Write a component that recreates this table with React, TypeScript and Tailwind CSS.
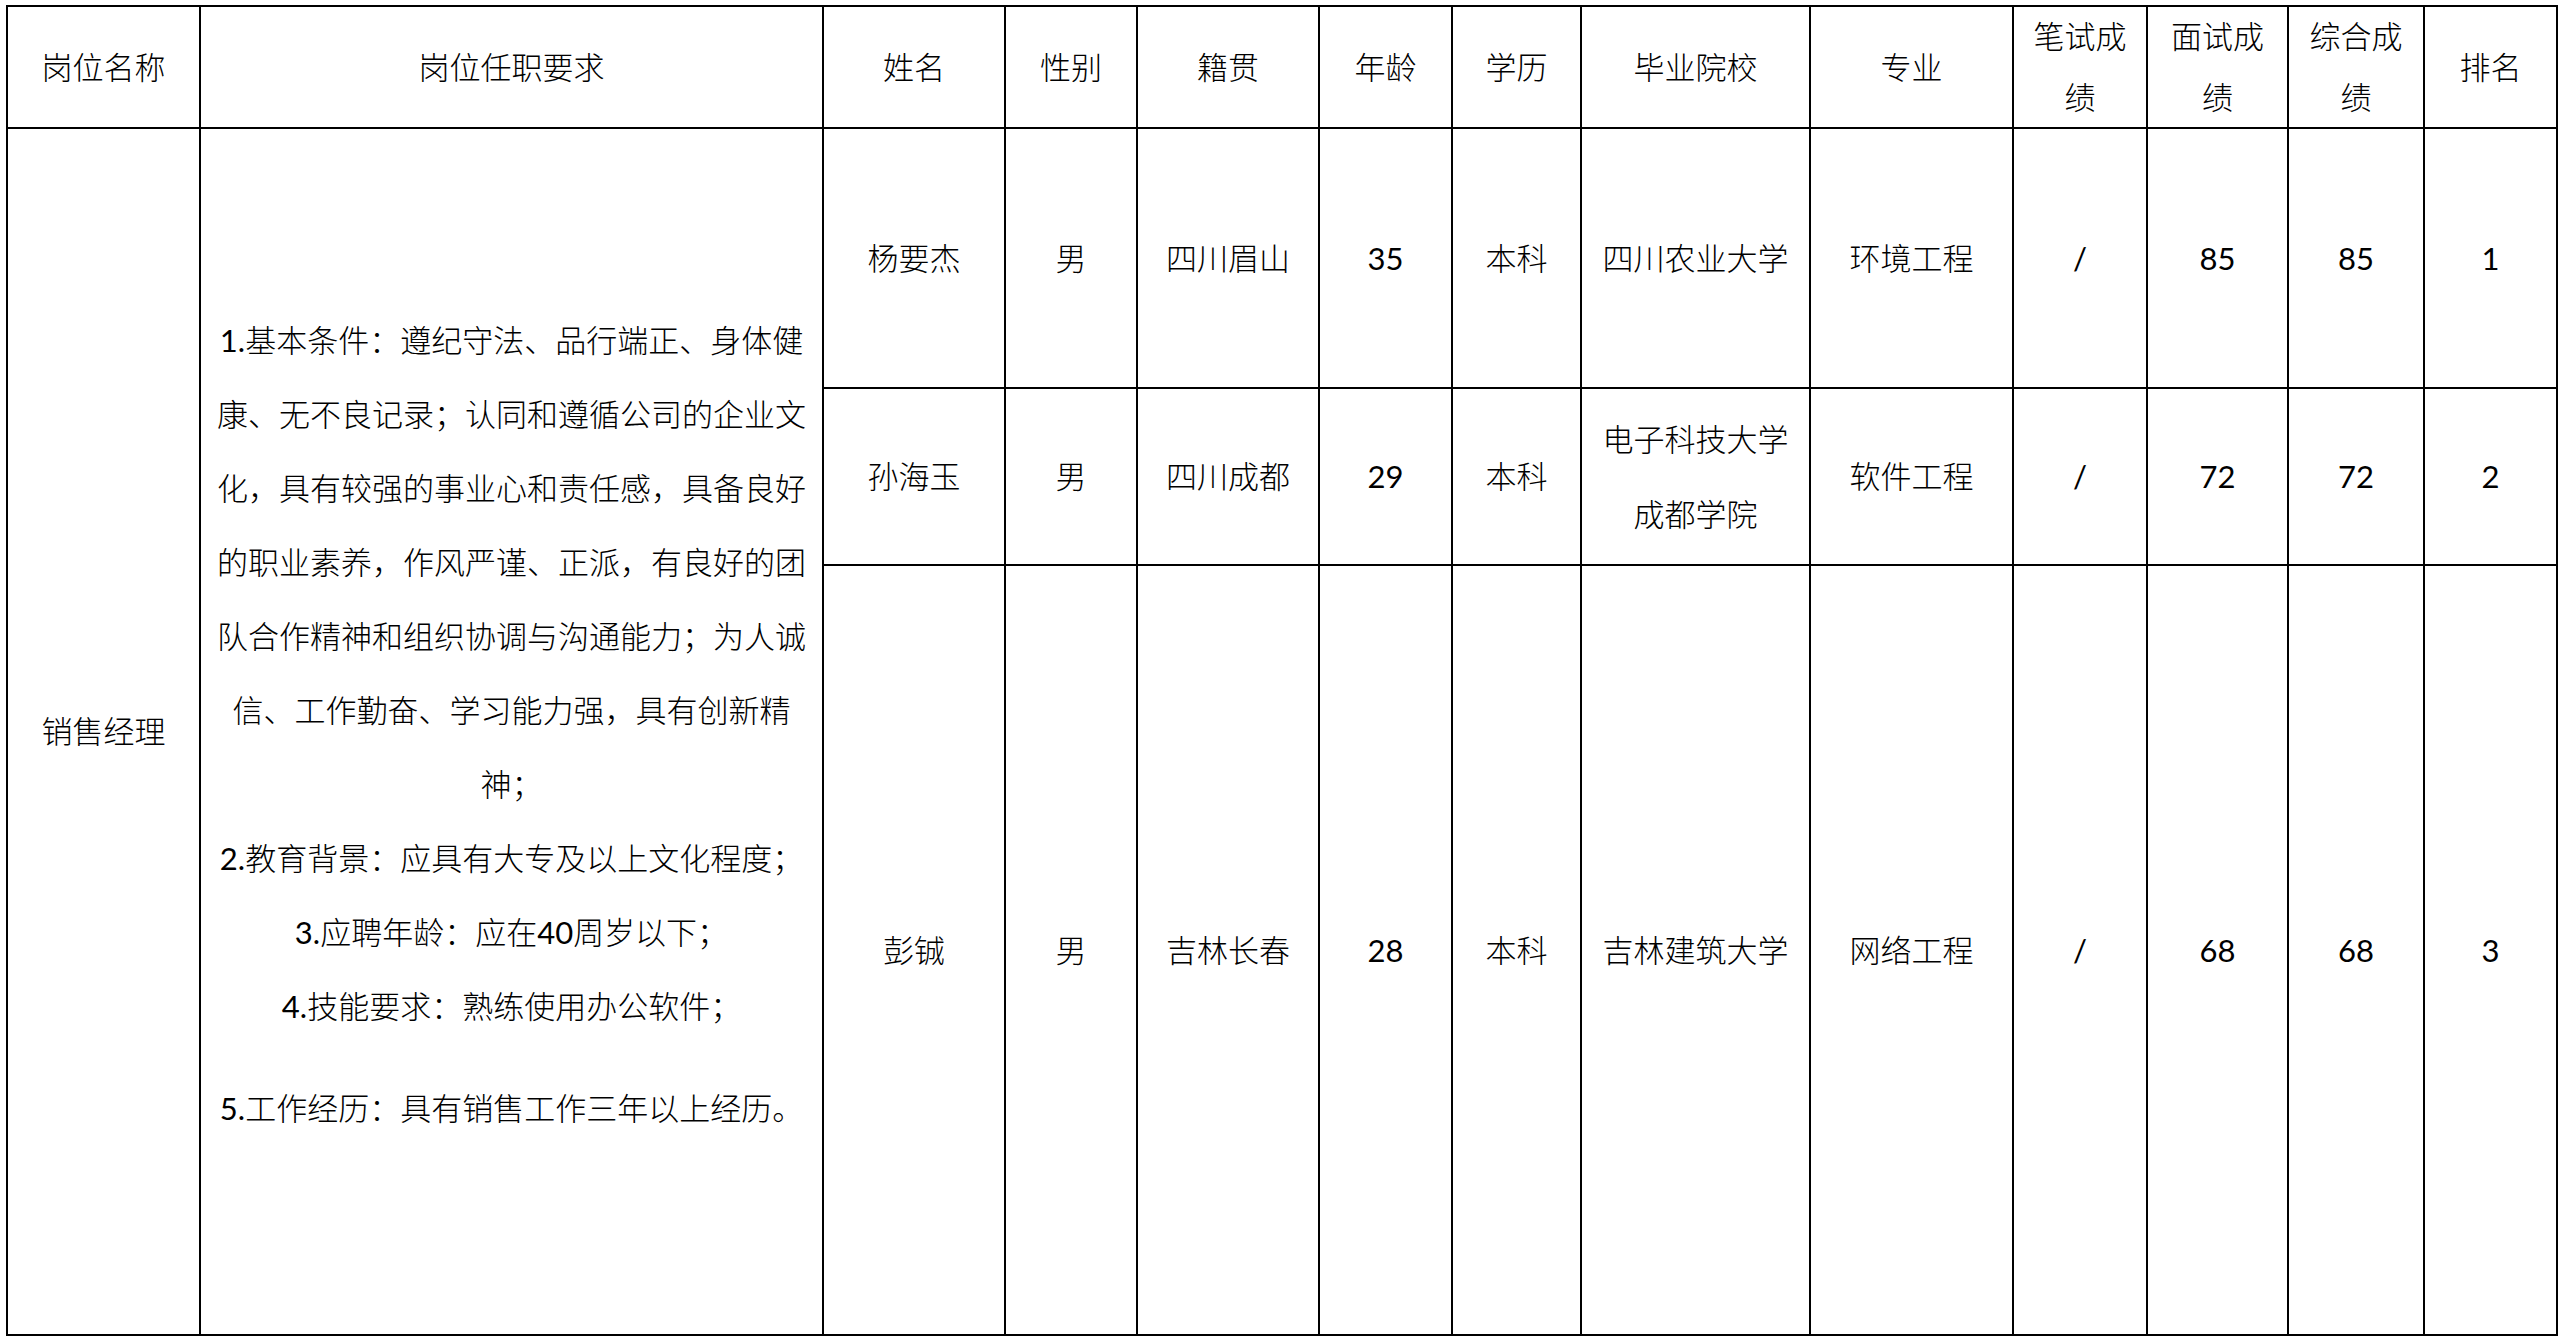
const font = { fontFamily: '"Lato", "Noto Sans CJK SC", sans-serif' };

const requirementLines = [
  "1.基本条件：遵纪守法、品行端正、身体健",
  "康、无不良记录；认同和遵循公司的企业文",
  "化，具有较强的事业心和责任感，具备良好",
  "的职业素养，作风严谨、正派，有良好的团",
  "队合作精神和组织协调与沟通能力；为人诚",
  "信、工作勤奋、学习能力强，具有创新精",
  "神；",
  "2.教育背景：应具有大专及以上文化程度；",
  "3.应聘年龄：应在40周岁以下；",
  "4.技能要求：熟练使用办公软件；",
];

const headers: string[][] = [
  ["岗位名称"],
  ["岗位任职要求"],
  ["姓名"],
  ["性别"],
  ["籍贯"],
  ["年龄"],
  ["学历"],
  ["毕业院校"],
  ["专业"],
  ["笔试成", "绩"],
  ["面试成", "绩"],
  ["综合成", "绩"],
  ["排名"],
];

const candidates = [
  {
    name: "杨要杰",
    gender: "男",
    origin: "四川眉山",
    age: "35",
    degree: "本科",
    school: ["四川农业大学"],
    major: "环境工程",
    written: "/",
    interview: "85",
    total: "85",
    rank: "1",
  },
  {
    name: "孙海玉",
    gender: "男",
    origin: "四川成都",
    age: "29",
    degree: "本科",
    school: ["电子科技大学", "成都学院"],
    major: "软件工程",
    written: "/",
    interview: "72",
    total: "72",
    rank: "2",
  },
  {
    name: "彭铖",
    gender: "男",
    origin: "吉林长春",
    age: "28",
    degree: "本科",
    school: ["吉林建筑大学"],
    major: "网络工程",
    written: "/",
    interview: "68",
    total: "68",
    rank: "3",
  },
];

// latin bits (digits, dots, slash) in regular weight, chinese stays light
function Txt({ text }: { text: string }) {
  return (
    <>
      {text.split(/([0-9./]+)/).map((part, i) =>
        /^[0-9./]+$/.test(part) ? (
          <span key={i} className="font-normal">
            {part}
          </span>
        ) : (
          part
        )
      )}
    </>
  );
}

function Cell({ children, className = "" }: { children: React.ReactNode; className?: string }) {
  return (
    <div
      className={`flex flex-col items-center justify-center text-center border-r-2 border-b-2 border-black ${className}`}
    >
      {children}
    </div>
  );
}

export default function App() {
  return (
    <div className="min-h-screen bg-white pl-[6px] pt-[5px] text-black" style={font}>
      <div className="grid w-max grid-cols-[193px_623px_182px_132px_182px_133px_129px_229px_203px_134px_141px_136px_133px] grid-rows-[122px_260px_177px_770px] border-l-2 border-t-2 border-black text-[31px] font-light">
        {headers.map((h) => (
          <Cell key={h.join("")} className="leading-[61px]">
            {h.map((line) => (
              <span key={line}>{line}</span>
            ))}
          </Cell>
        ))}

        <Cell className="row-span-3">
          <span>销售经理</span>
        </Cell>
        <Cell className="row-span-3 pb-[15px] leading-[74px]">
          {requirementLines.map((line) => (
            <span key={line} className="whitespace-nowrap">
              <Txt text={line} />
            </span>
          ))}
          <span className="h-[28px]" />
          <span className="whitespace-nowrap">
            <Txt text="5.工作经历：具有销售工作三年以上经历。" />
          </span>
        </Cell>

        {candidates.map((c) => (
          <div key={c.name} className="contents">
            <Cell>{c.name}</Cell>
            <Cell>{c.gender}</Cell>
            <Cell>{c.origin}</Cell>
            <Cell className="font-normal">{c.age}</Cell>
            <Cell>{c.degree}</Cell>
            <Cell className="leading-[75px]">
              {c.school.map((s) => (
                <span key={s}>{s}</span>
              ))}
            </Cell>
            <Cell>{c.major}</Cell>
            <Cell className="font-normal">{c.written}</Cell>
            <Cell className="font-normal">{c.interview}</Cell>
            <Cell className="font-normal">{c.total}</Cell>
            <Cell className="font-normal">{c.rank}</Cell>
          </div>
        ))}
      </div>
    </div>
  );
}
